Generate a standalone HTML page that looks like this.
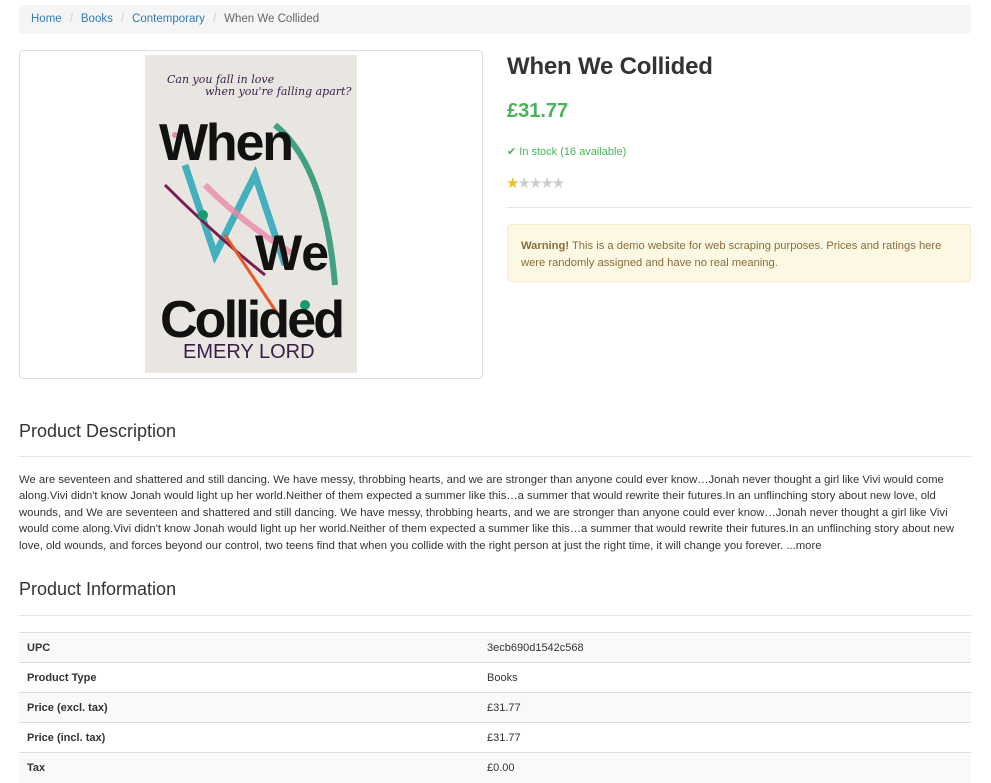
<!DOCTYPE html>
<html><head><meta charset="utf-8"><style>
*{box-sizing:border-box}
body{margin:0;font-family:"Liberation Sans",Arial,sans-serif;font-size:12px;color:#333;background:#fff;width:991px;height:776px;overflow:hidden}
.c{position:absolute;left:19px;width:952px}
.bc{top:5px;height:29px;background:#f5f5f5;border-radius:4px;padding:0 12px;line-height:29px;font-size:11.5px}
.bc a{color:#337ab7;text-decoration:none}
.bc .s{color:#ccc;padding:0 8px}
.bc .act{color:#666}
.img{position:absolute;left:19px;top:50px;width:464px;height:329px;border:1px solid #ddd;border-radius:4px}
h1{position:absolute;left:507px;top:53px;margin:0;font-size:24px;font-weight:bold;color:#333;letter-spacing:-0.2px}
.price{position:absolute;left:507px;top:100px;font-size:20px;font-weight:bold;color:#47b35a}
.stock{position:absolute;left:507px;top:145px;color:#47b35a;font-size:11px}
.stars{position:absolute;left:506px;top:174px;font-size:15px;letter-spacing:-2px;color:#ccc}
.hr1{position:absolute;left:507px;top:207px;width:464px;border-top:1px solid #e5e5e5}
.warn{position:absolute;left:507px;top:224px;width:464px;height:58px;background:#fcf8e3;border:1px solid #faebcc;border-radius:4px;color:#8a6d3b;padding:13px 13px;font-size:11.2px;line-height:17px}
h2{position:absolute;left:19px;margin:0;font-size:18px;font-weight:normal;color:#333}
.hr{position:absolute;left:19px;width:952px;border-top:1px solid #e5e5e5}
.desc{position:absolute;left:19px;top:472px;width:952px;line-height:16.4px;font-size:11.3px}
table{position:absolute;left:19px;top:632px;width:952px;border-collapse:collapse;font-size:11px}
td,th{height:30px;padding:0 8px;border-top:1px solid #ddd;text-align:left;vertical-align:middle}
th{width:460px;font-weight:bold}
tr:nth-child(odd){background:#f9f9f9}
</style></head><body>
<div class="c bc"><a>Home</a><span class="s">/</span><a>Books</a><span class="s">/</span><a>Contemporary</a><span class="s">/</span><span class="act">When We Collided</span></div>
<div class="img"></div>
<svg style="position:absolute;left:145px;top:55px" width="212" height="318" viewBox="0 0 212 318">
<rect width="212" height="318" fill="#e9e6e1"/>
<path d="M40 110 L70 200 L110 120 L140 210" stroke="#1aa3b5" stroke-width="7" fill="none" opacity=".8"/>
<path d="M130 70 Q180 110 190 230" stroke="#17906a" stroke-width="6" fill="none" opacity=".8"/>
<path d="M60 130 Q100 170 150 200" stroke="#e98aa8" stroke-width="6" fill="none" opacity=".8"/>
<path d="M20 130 Q70 180 120 220" stroke="#7a1d50" stroke-width="3" fill="none"/>
<path d="M80 180 L140 270" stroke="#e8582b" stroke-width="3" fill="none"/>
<circle cx="58" cy="160" r="5" fill="#1a9a70"/><circle cx="160" cy="250" r="5" fill="#1a9a70"/><circle cx="30" cy="80" r="3" fill="#e98aa8"/>
<text x="22" y="28" font-family="DejaVu Serif,serif" font-style="italic" font-size="11" fill="#3b1d4a">Can you fall in love</text>
<text x="60" y="40" font-family="DejaVu Serif,serif" font-style="italic" font-size="11" fill="#3b1d4a">when you're falling apart?</text>
<text x="14" y="105" font-family="Liberation Sans,sans-serif" font-weight="bold" font-size="52" fill="#111" textLength="135">When</text>
<text x="110" y="215" font-family="Liberation Sans,sans-serif" font-weight="bold" font-size="50" fill="#111">We</text>
<text x="15" y="282" font-family="Liberation Sans,sans-serif" font-weight="bold" font-size="52" fill="#111" textLength="185">Collided</text>
<text x="38" y="303" font-family="Liberation Sans,sans-serif" font-size="20" fill="#3b1d4a">EMERY LORD</text>
</svg>
<h1>When We Collided</h1>
<div class="price">£31.77</div>
<div class="stock">✔ In stock (16 available)</div>
<div class="stars"><span style="color:#e6c12b">★</span>★★★★</div>
<div class="hr1"></div>
<div class="warn"><b>Warning!</b> This is a demo website for web scraping purposes. Prices and ratings here were randomly assigned and have no real meaning.</div>
<h2 style="top:421px">Product Description</h2>
<div class="hr" style="top:456px"></div>
<div class="desc">We are seventeen and shattered and still dancing. We have messy, throbbing hearts, and we are stronger than anyone could ever know…Jonah never thought a girl like Vivi would come along.Vivi didn't know Jonah would light up her world.Neither of them expected a summer like this…a summer that would rewrite their futures.In an unflinching story about new love, old wounds, and We are seventeen and shattered and still dancing. We have messy, throbbing hearts, and we are stronger than anyone could ever know…Jonah never thought a girl like Vivi would come along.Vivi didn't know Jonah would light up her world.Neither of them expected a summer like this…a summer that would rewrite their futures.In an unflinching story about new love, old wounds, and forces beyond our control, two teens find that when you collide with the right person at just the right time, it will change you forever. ...more</div>
<h2 style="top:579px">Product Information</h2>
<div class="hr" style="top:615px"></div>
<table>
<tr><th>UPC</th><td>3ecb690d1542c568</td></tr>
<tr><th>Product Type</th><td>Books</td></tr>
<tr><th>Price (excl. tax)</th><td>£31.77</td></tr>
<tr><th>Price (incl. tax)</th><td>£31.77</td></tr>
<tr><th>Tax</th><td>£0.00</td></tr>
</table>
</body></html>
